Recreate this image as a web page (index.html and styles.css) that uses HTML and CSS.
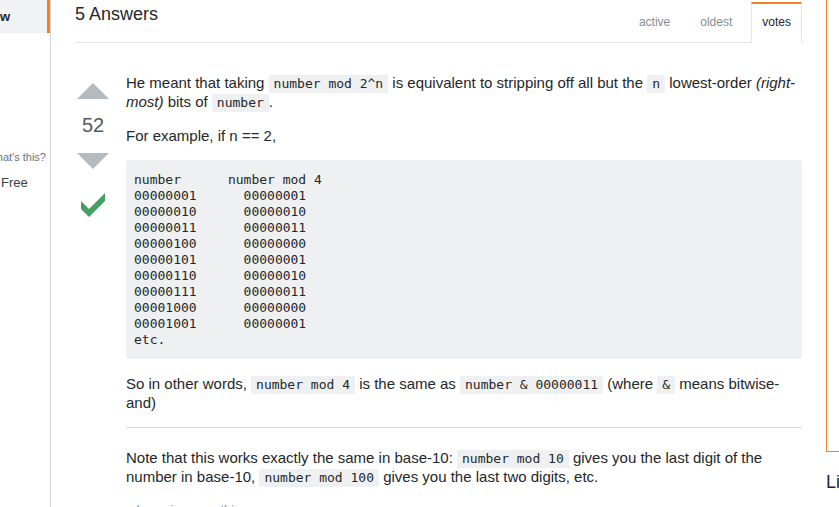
FILE: index.html
```html
<!DOCTYPE html>
<html lang="en">
<head>
<meta charset="utf-8">
<title>Answers</title>
<link rel="stylesheet" href="styles.css">
</head>
<body>
<div class="page">
  <nav class="leftnav">
    <div class="nav-item">w</div>
    <div class="nav-help"><span>what's this?</span></div>
    <div class="nav-free">Free</div>
  </nav>
  <main class="main">
    <div class="answers-header">
      <h2 class="answers-title">5 Answers</h2>
      <div class="tabs">
        <a class="tab">active</a>
        <a class="tab">oldest</a>
        <a class="tab selected">votes</a>
      </div>
    </div>
    <div class="answer">
      <div class="votecell">
        <span class="arrow up"></span>
        <span class="count">52</span>
        <span class="arrow down"></span>
        <svg class="check" width="36" height="36" viewBox="0 0 36 36"><path d="M6 14l8 8L30 6v8L14 30l-8-8v-8z"/></svg>
      </div>
      <div class="postcell">
        <p>He meant that taking <code class="ic">number mod 2^n</code> is equivalent to stripping off all but the <code class="ic">n</code> lowest-order <em>(right-most)</em> bits of <code class="ic">number</code>.</p>
        <p>For example, if n == 2,</p>
<pre><code>number      number mod 4
00000001      00000001
00000010      00000010
00000011      00000011
00000100      00000000
00000101      00000001
00000110      00000010
00000111      00000011
00001000      00000000
00001001      00000001
etc.</code></pre>
        <p>So in other words, <code class="ic">number mod 4</code> is the same as <code class="ic">number &amp; 00000011</code> (where <code class="ic">&amp;</code> means bitwise-and)</p>
        <hr class="rule">
        <p>Note that this works exactly the same in base-10: <code class="ic">number mod 10</code> gives you the last digit of the number in base-10, <code class="ic">number mod 100</code> gives you the last two digits, etc.</p>
        <div class="post-menu"><a>share</a><a>improve this answer</a></div>
      </div>
    </div>
  </main>
  <aside class="sidebar">
    <div class="promo"></div>
    <h4 class="linked">Linked</h4>
  </aside>
</div>
</body>
</html>
```
FILE: styles.css
```css
html, body {
  margin: 0;
  padding: 0;
  background: #fff;
}
body {
  font-family: "Liberation Sans", Arial, sans-serif;
  color: #242729;
  overflow: hidden;
}
.page {
  display: flex;
  width: 839px;
  height: 507px;
  overflow: hidden;
}
.leftnav {
  flex: 0 0 50px;
  width: 50px;
  border-right: 1px solid #d6d9dc;
  overflow: hidden;
}
.nav-item {
  height: 33px;
  line-height: 33px;
  width: 47px;
  background: #f1f2f3;
  border-right: 3px solid #f48024;
  font-weight: bold;
  font-size: 13px;
  color: #242729;
}
.nav-help {
  display: flex;
  justify-content: flex-end;
  margin-top: 117px;
  padding-right: 4px;
  font-size: 11px;
  line-height: 15px;
  color: #6a737c;
  white-space: nowrap;
}
.nav-help span {
  flex: 0 0 auto;
}
.nav-free {
  margin-top: 9px;
  font-size: 13px;
  line-height: 17px;
  color: #3b4045;
  padding-left: 1px;
}
.main {
  flex: 0 0 728px;
  width: 728px;
  margin-left: 24px;
}
.answers-header {
  display: flex;
  justify-content: space-between;
  align-items: flex-end;
  height: 42px;
  border-bottom: 1px solid #e4e6e8;
}
.answers-title {
  align-self: flex-start;
  margin: 0;
  padding-top: 2px;
  font-size: 18px;
  line-height: 24px;
  font-weight: normal;
}
.tabs {
  display: flex;
  gap: 8px;
  margin-bottom: -1px;
  margin-right: 1px;
}
.tab {
  display: block;
  font-size: 12px;
  line-height: 36px;
  padding: 0 10px 3px;
  border: 1px solid transparent;
  border-top: 2px solid transparent;
  border-bottom: none;
  color: #848d95;
}
.tab.selected {
  border-color: #e4e6e8;
  border-top-color: #f48024;
  background: #fff;
  color: #242729;
}
.answer {
  display: flex;
  padding-top: 30px;
}
.votecell {
  flex: 0 0 36px;
  width: 36px;
  margin-right: 15px;
  display: flex;
  flex-direction: column;
  align-items: center;
}
.arrow {
  display: block;
  width: 0;
  height: 0;
  border-left: 16px solid transparent;
  border-right: 16px solid transparent;
}
.arrow.up {
  margin-top: 10px;
  border-bottom: 16px solid #b5babe;
}
.arrow.down {
  margin-top: 15px;
  border-top: 16px solid #b5babe;
}
.count {
  display: block;
  margin-top: 14px;
  font-size: 20px;
  line-height: 25px;
  color: #535a60;
}
.check {
  display: block;
  margin-top: 18px;
  fill: #45a163;
}
.postcell {
  width: 676px;
  font-size: 15px;
  line-height: 19px;
}
.postcell p {
  margin: 0 0 15px;
}
code {
  font-family: "DejaVu Sans Mono", "Liberation Mono", monospace;
  font-size: 13px;
}
.ic {
  background: #eff0f1;
  padding: 1px 5px 2px;
  line-height: 1;
}
pre {
  margin: 0 0 15px;
  padding: 12px 8px 11px;
  background: #eff0f1;
  border-radius: 3px;
  font-family: "DejaVu Sans Mono", "Liberation Mono", monospace;
  font-size: 13px;
  line-height: 16px;
  overflow: hidden;
}
.rule {
  border: 0;
  border-top: 1px solid #d6d9dc;
  height: 0;
  margin: 14px 0 20px;
}
.post-menu {
  display: flex;
  margin-top: 15px;
  font-size: 13px;
  line-height: 17px;
}
.post-menu a {
  padding: 0 4px;
  color: #848d95;
}
.sidebar {
  flex: 0 0 300px;
  width: 300px;
  margin-left: 23px;
}
.promo {
  height: 451px;
  border-left: 1px solid #f48024;
  border-bottom: 1px solid #f48024;
}
.linked {
  margin: 18px 0 0;
  font-size: 18px;
  line-height: 24px;
  font-weight: normal;
  color: #242729;
}
```
